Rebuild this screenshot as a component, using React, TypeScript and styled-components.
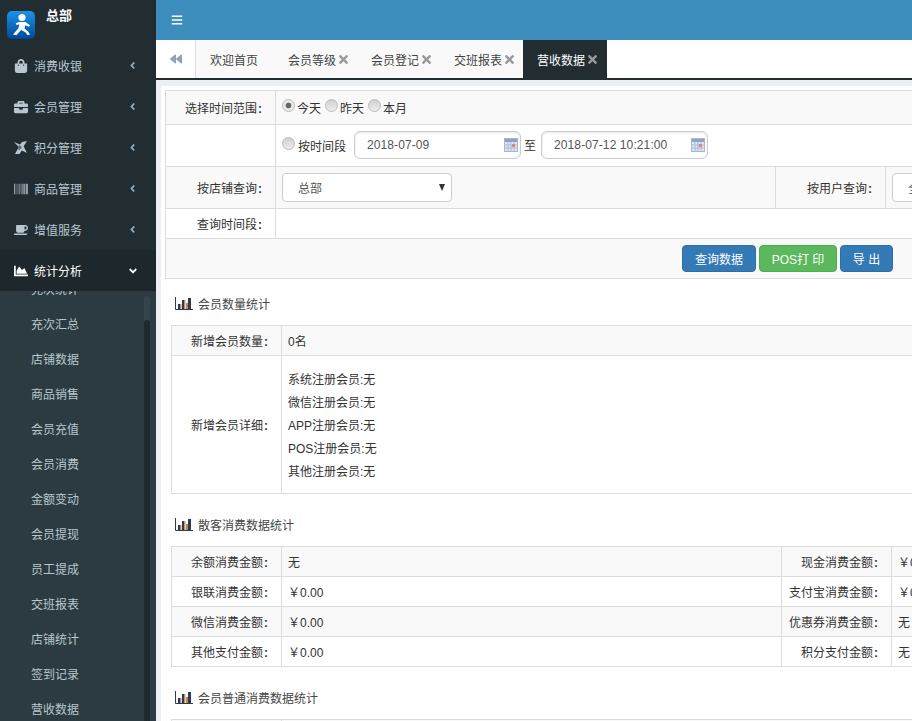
import React from "react";
import styled, { createGlobalStyle } from "styled-components";
import { FaShoppingBag, FaBriefcase, FaBarcode, FaCoffee, FaChartArea, FaAngleLeft, FaAngleDown, FaBars, FaBackward, FaTimes } from "react-icons/fa";

const Global = createGlobalStyle`
  html, body { margin: 0; padding: 0; height: 100%; overflow: hidden; }
  body { font-family: "Liberation Sans", "Noto Sans CJK SC", sans-serif; font-size: 12px; color: #333; }
  * { box-sizing: border-box; }
`;

const Page = styled.div`
  display: flex;
  width: 912px;
  height: 721px;
  overflow: hidden;
  background: #ecf0f5;
`;
const Sidebar = styled.aside`
  width: 156px;
  flex: none;
  display: flex;
  flex-direction: column;
  background: #222d32;
`;
const Brand = styled.div`
  height: 45px;
  flex: none;
  display: flex;
  align-items: flex-start;
  padding: 11px 0 0 7px;
`;
const BrandName = styled.span`
  margin: -1px 0 0 11px;
  color: #fff;
  font-size: 13px;
  font-weight: 700;
  line-height: 12px;
`;
const MenuItem = styled.div<{ $active?: boolean }>`
  height: 41px;
  flex: none;
  display: flex;
  align-items: center;
  padding: 0 17px 0 14px;
  color: ${(p) => (p.$active ? "#fff" : "#b8c7ce")};
  background: ${(p) => (p.$active ? "#1e282c" : "transparent")};
`;
const MenuIcon = styled.span`
  width: 20px;
  flex: none;
  display: flex;
  align-items: center;
  font-size: 14px;
`;
const MenuLabel = styled.span`
  flex: 1;
`;
const Chevron = styled.span<{ $active?: boolean }>`
  display: flex;
  color: ${(p) => (p.$active ? "#fff" : "#8fb0c2")};
  font-size: ${(p) => (p.$active ? "12px" : "11px")};
  margin-right: ${(p) => (p.$active ? "0" : "1px")};
`;
const SubMenu = styled.div`
  position: relative;
  flex: 1;
  min-height: 0;
  overflow: hidden;
  background: #2c3b41;
`;
const SubList = styled.div`
  margin-top: -20px;
`;
const SubItem = styled.div`
  height: 35px;
  display: flex;
  align-items: center;
  padding-left: 31px;
  color: #b8c7ce;
`;
const ScrollTrack = styled.div`
  position: absolute;
  left: 144px;
  top: 5px;
  bottom: 0;
  width: 6px;
  border-radius: 3px 3px 0 0;
  background: #33444b;
`;
const ScrollThumb = styled.div`
  position: absolute;
  left: 0;
  right: 0;
  top: 24px;
  bottom: 0;
  border-radius: 3px 3px 0 0;
  background: #1d2a2d;
`;
const Main = styled.main`
  flex: 1;
  min-width: 0;
  display: flex;
  flex-direction: column;
  overflow: hidden;
`;
const Header = styled.header`
  height: 40px;
  flex: none;
  display: flex;
  align-items: center;
  padding-left: 15px;
  background: #3c8dbc;
  color: #fff;
  font-size: 12px;
`;
const TabBar = styled.nav`
  height: 40px;
  flex: none;
  display: flex;
  background: #fff;
  border-bottom: 2px solid #222d32;
`;
const BackTab = styled.div`
  width: 40px;
  display: flex;
  align-items: center;
  justify-content: center;
  border-right: 1px solid #ddd;
  color: #97a0b3;
  font-size: 12px;
  padding-left: 1px;
`;
const Tab = styled.div<{ $active?: boolean }>`
  display: flex;
  align-items: center;
  padding: 0 ${(p) => (p.$active ? "8px" : "7px")} 0 14px;
  min-width: 78px;
  background: ${(p) => (p.$active ? "#222d32" : "#f9f9f9")};
  color: ${(p) => (p.$active ? "#fff" : "#444")};
`;
const Close = styled.span`
  display: flex;
  margin-left: 1px;
  color: #999;
  font-size: 13px;
`;
const Panel = styled.div`
  flex: 1;
  margin: 6px 0 0 5px;
  padding: 4px 0 0 4px;
  background: #fff;
`;
const Table = styled.table`
  width: 1245px;
  table-layout: fixed;
  border-collapse: collapse;
  & tr:nth-child(odd) > td { background: #f9f9f9; }
`;
const Cell = styled.td`
  border: 1px solid #ddd;
  padding: 4px 6px 0;
  vertical-align: middle;
  line-height: 17px;
`;
const ControlCell = styled(Cell)`
  padding: 0 6px;
`;
const Label = styled(Cell)`
  text-align: right;
  padding-right: 13px;
  color: #333;
`;
const Row = styled.tr<{ $h: number }>`
  height: ${(p) => p.$h}px;
`;
const Colon = styled.b`
  font-weight: 700;
  margin-left: 1px;
`;
const Radio = styled.span<{ $on?: boolean }>`
  display: inline-block;
  flex: none;
  width: 13px;
  height: 13px;
  margin-right: 2px;
  border-radius: 50%;
  border: 1px solid #bdbdbd;
  background: ${(p) =>
    p.$on
      ? "radial-gradient(circle, #666 0 2.6px, #e9e9e9 3.2px)"
      : "linear-gradient(#cfcfcf, #eee)"};
`;
const RadioLine = styled.div`
  display: flex;
  align-items: center;
  gap: 4px;
`;
const RadioOption = styled.span<{ $gap?: number }>`
  display: inline-flex;
  align-items: flex-start;
  gap: ${(p) => p.$gap ?? 0}px;
  padding-top: 2px;
`;
const RadioText = styled.span`
  padding-top: 2px;
`;
const DateBox = styled.div`
  width: 167px;
  height: 28px;
  margin-top: -2px;
  display: flex;
  align-items: center;
  justify-content: space-between;
  padding: 0 2px 0 12px;
  border: 1px solid #ccc;
  border-radius: 6px;
  box-shadow: inset 0 1px 3px rgba(0, 0, 0, 0.1);
  color: #555;
  letter-spacing: 0.1px;
`;
const DateText = styled.span`
  padding-top: 2px;
`;
const Sep = styled.span`
  margin: 0 5px 0 3px;
  padding-top: 2px;
`;
const DateRow = styled.div`
  display: flex;
  align-items: center;
`;
const SelectBox = styled.div<{ $w: number }>`
  position: relative;
  width: ${(p) => p.$w}px;
  height: 29px;
  display: flex;
  align-items: center;
  padding: 4px 0 0 15px;
  border: 1px solid #ccc;
  border-radius: 4px;
  background: #fff;
  color: #555;
`;
const Caret = styled.span`
  position: absolute;
  right: 6px;
  top: 10px;
  width: 0;
  height: 0;
  border-left: 3.5px solid transparent;
  border-right: 3.5px solid transparent;
  border-top: 7px solid #333;
`;
const ButtonCell = styled(Cell)`
  padding: 0 6px;
  text-align: center;
  font-size: 0;
`;
const Button = styled.span<{ $green?: boolean; $w: number }>`
  display: inline-flex;
  align-items: center;
  justify-content: center;
  width: ${(p) => p.$w}px;
  height: 27px;
  margin: 0 1.5px;
  padding-top: 4px;
  border-radius: 4px;
  border: 1px solid ${(p) => (p.$green ? "#4cae4c" : "#2e6da4")};
  background: ${(p) => (p.$green ? "#5cb85c" : "#337ab7")};
  color: #fff;
  font-size: 12px;
  white-space: pre;
`;
const Section = styled.section`
  padding-left: 6px;
`;
const Heading = styled.h3`
  height: 46px;
  margin: 0;
  display: flex;
  align-items: center;
  gap: 5px;
  padding: 2px 0 0 4px;
  font-size: 12px;
  font-weight: 400;
  color: #444;
`;
const Lines = styled.div`
  line-height: 23px;
`;
const StatTable = styled(Table)`
  margin-bottom: 6px;
`;

const Logo = () => (
  <svg width="28" height="28" viewBox="0 0 28 28">
    <defs>
      <linearGradient id="lg" x1="0" y1="0" x2="0" y2="1">
        <stop offset="0" stopColor="#1b93ea" />
        <stop offset="1" stopColor="#004a96" />
      </linearGradient>
    </defs>
    <rect width="28" height="28" rx="5" fill="url(#lg)" />
    <circle cx="15" cy="6.5" r="3.6" fill="#fff" />
    <path d="M11.5 11h7l4.5 3.2-1 1.6-4-1.6-.4 3.6 3.6 2.6 1.8 3.2-2.3.7-2.7-3.2-4-2-4.6 5.2-3.4-.7 5.6-6.6.6-3.8-2.6.9-.9-1.5z" fill="#fff" />
  </svg>
);
const Pinwheel = () => (
  <svg width="13" height="13" viewBox="0 0 13 13" fill="currentColor">
    <path d="M0 1l6 2.6L8 1l5-1-3.4 5.2L13 12 7.8 9.4 5.5 13 1 13l2.6-4.8L5 6.2z" />
    <path d="M5 3.5l3 3-3 3-1-3z" fill="#5d6f78" />
  </svg>
);
const Calendar = () => (
  <svg width="14" height="14" viewBox="0 0 14 14">
    <rect x="0.5" y="0.5" width="13" height="13" fill="#dfe6f4" stroke="#a9b6cf" />
    <rect x="1" y="1" width="12" height="3" fill="#8fa3c6" />
    <path d="M1 7h12M1 10h12M4 4v9M7 4v9M10 4v9" stroke="#a9bad8" strokeWidth="1" />
    <rect x="8" y="6" width="3" height="3" fill="#e8836f" />
  </svg>
);
const BarIcon = () => (
  <svg width="18" height="13" viewBox="0 0 18 13">
    <path d="M.5 0v12.5H18" fill="none" stroke="#2d3a55" strokeWidth="1" />
    <rect x="3" y="7" width="2.4" height="5" fill="#2d3a55" />
    <rect x="5.4" y="7" width="1" height="5" fill="#c08a3e" />
    <rect x="7" y="3" width="2.4" height="9" fill="#2d3a55" />
    <rect x="9.4" y="3" width="1" height="9" fill="#c08a3e" />
    <rect x="11" y="6" width="2" height="6" fill="#c08a3e" />
    <rect x="13" y="1" width="3" height="11" fill="#2d3a55" />
  </svg>
);

const menu = [
  { label: "消费收银", icon: <FaShoppingBag /> },
  { label: "会员管理", icon: <FaBriefcase /> },
  { label: "积分管理", icon: <Pinwheel /> },
  { label: "商品管理", icon: <FaBarcode /> },
  { label: "增值服务", icon: <FaCoffee /> },
];
const subs = ["充次统计", "充次汇总", "店铺数据", "商品销售", "会员充值", "会员消费", "金额变动", "会员提现", "员工提成", "交班报表", "店铺统计", "签到记录", "营收数据"];
const details = ["系统注册会员:无", "微信注册会员:无", "APP注册会员:无", "POS注册会员:无", "其他注册会员:无"];
const tabs = ["会员等级", "会员登记", "交班报表"];
const spend = [
  ["余额消费金额", "无", "现金消费金额", "￥0.00"],
  ["银联消费金额", "￥0.00", "支付宝消费金额", "￥0.00"],
  ["微信消费金额", "￥0.00", "优惠券消费金额", "无"],
  ["其他支付金额", "￥0.00", "积分支付金额", "无"],
];

const Cols = () => (
  <colgroup>
    <col width="110" />
    <col width="500" />
    <col width="110" />
    <col />
  </colgroup>
);
const Lab = ({ t }: { t: string }) => (
  <Label>
    {t}
    <Colon>:</Colon>
  </Label>
);
const Title = ({ t }: { t: string }) => (
  <Heading>
    <BarIcon />
    {t}
  </Heading>
);

export default function App() {
  return (
    <Page>
      <Global />
      <Sidebar>
        <Brand>
          <Logo />
          <BrandName>总部</BrandName>
        </Brand>
        {menu.map((m) => (
          <MenuItem key={m.label}>
            <MenuIcon>{m.icon}</MenuIcon>
            <MenuLabel>{m.label}</MenuLabel>
            <Chevron>
              <FaAngleLeft />
            </Chevron>
          </MenuItem>
        ))}
        <MenuItem $active>
          <MenuIcon>
            <FaChartArea />
          </MenuIcon>
          <MenuLabel>统计分析</MenuLabel>
          <Chevron $active>
            <FaAngleDown />
          </Chevron>
        </MenuItem>
        <SubMenu>
          <SubList>
            {subs.map((s) => (
              <SubItem key={s}>{s}</SubItem>
            ))}
          </SubList>
          <ScrollTrack>
            <ScrollThumb />
          </ScrollTrack>
        </SubMenu>
      </Sidebar>
      <Main>
        <Header>
          <FaBars />
        </Header>
        <TabBar>
          <BackTab>
            <FaBackward />
          </BackTab>
          <Tab>欢迎首页</Tab>
          {tabs.map((t) => (
            <Tab key={t}>
              {t}
              <Close>
                <FaTimes />
              </Close>
            </Tab>
          ))}
          <Tab $active>
            营收数据
            <Close>
              <FaTimes />
            </Close>
          </Tab>
        </TabBar>
        <Panel>
          <Table>
            <Cols />
            <tbody>
              <Row $h={34}>
                <Lab t="选择时间范围" />
                <ControlCell colSpan={3}>
                  <RadioLine>
                    <RadioOption>
                      <Radio $on />
                      <RadioText>今天</RadioText>
                    </RadioOption>
                    <RadioOption>
                      <Radio />
                      <RadioText>昨天</RadioText>
                    </RadioOption>
                    <RadioOption>
                      <Radio />
                      <RadioText>本月</RadioText>
                    </RadioOption>
                  </RadioLine>
                </ControlCell>
              </Row>
              <Row $h={42}>
                <Cell />
                <ControlCell colSpan={3}>
                  <DateRow>
                    <RadioOption $gap={1}>
                      <Radio />
                      <RadioText>按时间段</RadioText>
                    </RadioOption>
                    <Sep />
                    <DateBox>
                      <DateText>2018-07-09</DateText>
                      <Calendar />
                    </DateBox>
                    <Sep>至</Sep>
                    <DateBox>
                      <DateText>2018-07-12 10:21:00</DateText>
                      <Calendar />
                    </DateBox>
                  </DateRow>
                </ControlCell>
              </Row>
              <Row $h={42}>
                <Lab t="按店铺查询" />
                <ControlCell>
                  <SelectBox $w={170}>
                    总部
                    <Caret />
                  </SelectBox>
                </ControlCell>
                <Lab t="按用户查询" />
                <ControlCell>
                  <SelectBox $w={170}>
                    全部
                    <Caret />
                  </SelectBox>
                </ControlCell>
              </Row>
              <Row $h={30}>
                <Lab t="查询时间段" />
                <Cell colSpan={3} />
              </Row>
              <Row $h={40}>
                <ButtonCell colSpan={4}>
                  <Button $w={74}>查询数据</Button>
                  <Button $green $w={78}>POS打 印</Button>
                  <Button $w={53}>导 出</Button>
                </ButtonCell>
              </Row>
            </tbody>
          </Table>
          <Section>
            <Title t="会员数量统计" />
            <StatTable>
              <Cols />
              <tbody>
                <Row $h={30}>
                  <Lab t="新增会员数量" />
                  <Cell colSpan={3}>0名</Cell>
                </Row>
                <Row $h={138}>
                  <Lab t="新增会员详细" />
                  <Cell colSpan={3}>
                    <Lines>
                      {details.map((d) => (
                        <div key={d}>{d}</div>
                      ))}
                    </Lines>
                  </Cell>
                </Row>
              </tbody>
            </StatTable>
            <Title t="散客消费数据统计" />
            <StatTable>
              <Cols />
              <tbody>
                {spend.map((r) => (
                  <Row $h={30} key={r[0]}>
                    <Lab t={r[0]} />
                    <Cell>{r[1]}</Cell>
                    <Lab t={r[2]} />
                    <Cell>{r[3]}</Cell>
                  </Row>
                ))}
              </tbody>
            </StatTable>
            <Title t="会员普通消费数据统计" />
            <StatTable>
              <Cols />
              <tbody>
                <Row $h={30}>
                  <Lab t="余额消费金额" />
                  <Cell colSpan={3}>无</Cell>
                </Row>
              </tbody>
            </StatTable>
          </Section>
        </Panel>
      </Main>
    </Page>
  );
}
